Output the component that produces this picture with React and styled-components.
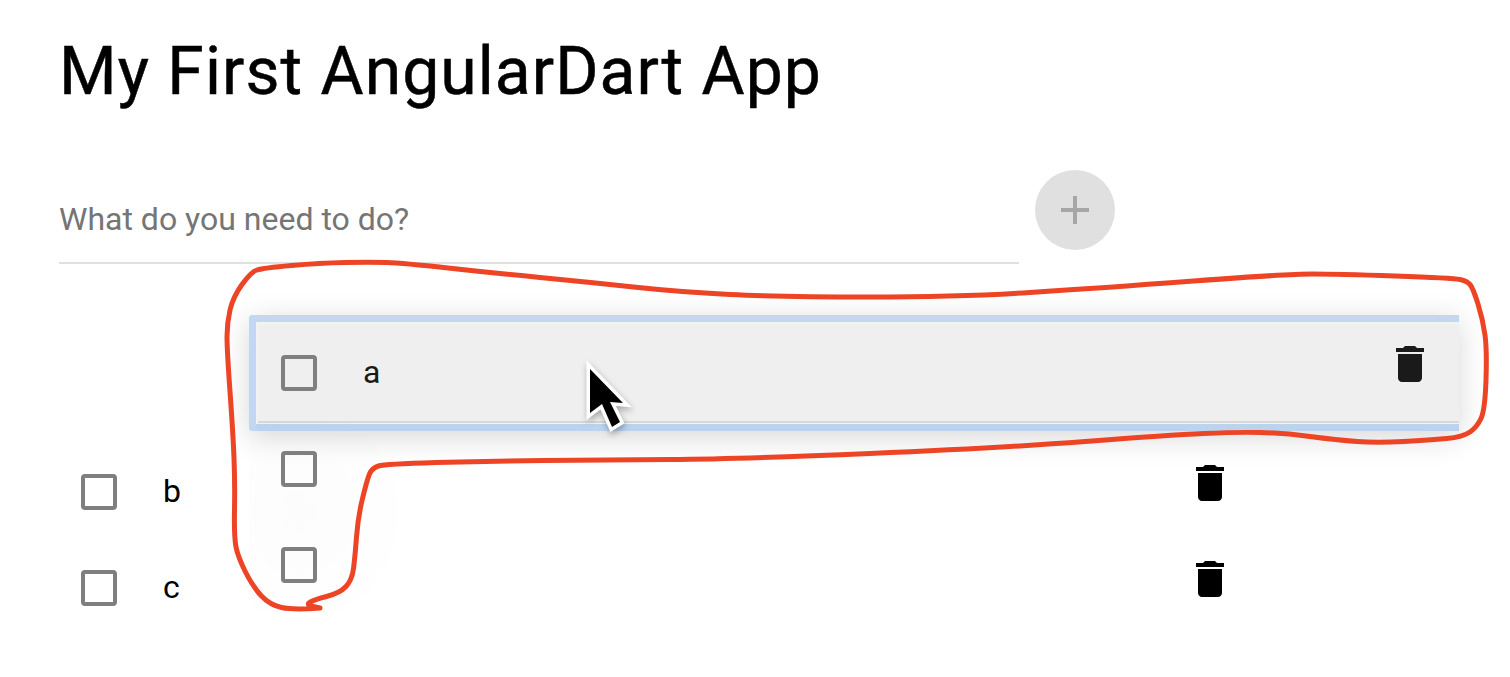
import styled, { createGlobalStyle } from "styled-components";

const GlobalStyle = createGlobalStyle`
  html, body {
    margin: 0;
    background: #fff;
    font-family: Roboto, "Liberation Sans", sans-serif;
  }
`;

const scribble = [
  [320, 608], [293, 610], [270, 605], [253, 587], [238, 557], [234, 537], [235, 483], [233, 433],
  [227, 350], [227, 323], [233, 297], [251, 272], [263, 268], [320, 263], [370, 262], [403, 263],
  [493, 273], [587, 282], [680, 292], [780, 297], [960, 297], [1100, 288], [1287, 274], [1337, 274],
  [1453, 278], [1467, 281], [1473, 288], [1483, 320], [1487, 350], [1485, 410], [1477, 427],
  [1463, 437], [1430, 440], [1377, 443], [1337, 440], [1283, 433], [1237, 432], [1170, 435],
  [1000, 448], [740, 459], [600, 460], [487, 461], [385, 464], [372, 468], [367, 480], [358, 517],
  [355, 557], [352, 580], [340, 593], [313, 600], [306, 605], [320, 608],
];

// rounds the corners of the traced line through the midpoints
const smoothPath = (pts) => {
  let d = `M${pts[0][0]} ${pts[0][1]}`;
  for (let i = 1; i < pts.length - 1; i++) {
    const mx = (pts[i][0] + pts[i + 1][0]) / 2;
    const my = (pts[i][1] + pts[i + 1][1]) / 2;
    d += ` Q${pts[i][0]} ${pts[i][1]} ${mx} ${my}`;
  }
  const last = pts[pts.length - 1];
  return `${d} L${last[0]} ${last[1]}`;
};

const TrashIcon = () => (
  <TrashSvg viewBox="0 0 24 24">
    <path d="M6 19c0 1.1.9 2 2 2h8c1.1 0 2-.9 2-2V7H6v12zM19 4h-3.5l-1-1h-5l-1 1H5v2h14V4z" />
  </TrashSvg>
);

const App = () => {
  return (
    <Page>
      <GlobalStyle />
      <Title>My First AngularDart App</Title>
      <AddRow>
        <Field>
          <TodoInput placeholder="What do you need to do?" />
        </Field>
        <AddButton>
          <svg width="48" height="48" viewBox="0 0 24 24" fill="#a6a6a6">
            <path d="M19 13h-6v6h-2v-6H5v-2h6V5h2v6h6v2z" />
          </svg>
        </AddButton>
      </AddRow>
      <List>
        <Row>
          <Check />
          <Label>b</Label>
          <TrashIcon />
        </Row>
        <Row>
          <Check />
          <Label>c</Label>
          <TrashIcon />
        </Row>
      </List>

      <DragImage>
        <Selected>
          <DragRow>
            <Check />
            <Label>a</Label>
            <TrashIcon />
          </DragRow>
        </Selected>
        <GhostList>
          <GhostRow>
            <Check />
          </GhostRow>
          <GhostRow>
            <Check />
          </GhostRow>
        </GhostList>
      </DragImage>

      <Annotation viewBox="0 0 1510 677">
        <path d={smoothPath(scribble)} />
      </Annotation>
      <Cursor viewBox="0 0 50 76">
        <path d="M5 9 V53 L17 44 L27 67 L35 62 L25 42 L38 43 Z" />
      </Cursor>
    </Page>
  );
};

const Page = styled.div`
  position: relative;
  width: 1510px;
  height: 677px;
  overflow: hidden;
  padding: 29px 0 0 59px;
  box-sizing: border-box;
`;

const Title = styled.h1`
  margin: 0;
  height: 85px;
  font-size: 66px;
  line-height: 85px;
  font-weight: 400;
  letter-spacing: 1.05px;
  -webkit-text-stroke: 0.5px #000;
  color: #000;
`;

const AddRow = styled.div`
  display: flex;
  align-items: flex-start;
  gap: 16px;
  margin: 56px 0 0 0;
`;

const Field = styled.div`
  width: 960px;
  height: 94px;
  box-sizing: border-box;
  border-bottom: 2px solid #e0e0e0;
  display: flex;
  align-items: flex-end;
`;

const TodoInput = styled.input`
  width: 100%;
  height: 86px;
  box-sizing: border-box;
  padding: 0;
  border: none;
  outline: none;
  background: transparent;
  font-family: inherit;
  font-size: 32px;
  &::placeholder {
    color: #757575;
    opacity: 1;
  }
`;

const AddButton = styled.div`
  width: 80px;
  height: 80px;
  border-radius: 50%;
  background: #e0e0e0;
  display: flex;
  align-items: center;
  justify-content: center;
`;

const List = styled.div`
  margin: 180px 0 0 -2px;
  width: 1202px;
`;

const Row = styled.div`
  display: flex;
  align-items: center;
  height: 96px;
  padding-left: 24px;
  box-sizing: border-box;
`;

const Check = styled.div`
  width: 36px;
  height: 36px;
  box-sizing: border-box;
  flex: none;
  border: 4px solid #7f7f7f;
  border-radius: 4px;
`;

const Label = styled.span`
  margin: 0 0 2px 46px;
  font-size: 32px;
  color: inherit;
`;

const TrashSvg = styled.svg`
  width: 48px;
  height: 48px;
  flex: none;
  margin-left: auto;
  margin-right: 25px;
  margin-top: -18px;
  fill: currentColor;
`;

const DragImage = styled.div`
  position: absolute;
  left: 249px;
  top: 315px;
  width: 1210px;
  color: #1a1a1a;
`;

const Selected = styled.div`
  height: 116px;
  box-sizing: border-box;
  padding: 10px 0 0 9px;
  background: linear-gradient(#c2d8f2 7px, #f2f2f2 7px, #f2f2f2 109px, #bcd3ee 109px);
  border-radius: 4px 0 0 4px;
  box-shadow: 0 6px 30px rgba(0, 0, 0, 0.16), inset 7px 0 0 #c2d8f2;
`;

const DragRow = styled(Row)`
  height: 98px;
  padding-left: 23px;
  background: #efefef;
  border-bottom: 2px solid #d8d8d8;
`;

const GhostList = styled.div`
  margin-top: -10px;
  background: radial-gradient(ellipse 120px 130px at 50px 90px, rgba(0, 0, 0, 0.012), transparent);
`;

const GhostRow = styled(Row)`
  padding-left: 32px;
`;

const Annotation = styled.svg`
  position: absolute;
  left: 0;
  top: 0;
  width: 1510px;
  height: 677px;
  pointer-events: none;
  fill: none;
  stroke: #ee4426;
  stroke-width: 5;
  stroke-linecap: round;
  stroke-linejoin: round;
`;

const Cursor = styled.svg`
  position: absolute;
  left: 585px;
  top: 360px;
  width: 50px;
  height: 76px;
  overflow: visible;
  fill: #000;
  stroke: #fff;
  stroke-width: 7;
  paint-order: stroke;
  filter: drop-shadow(1px 3px 3px rgba(0, 0, 0, 0.3));
`;

export default App;
